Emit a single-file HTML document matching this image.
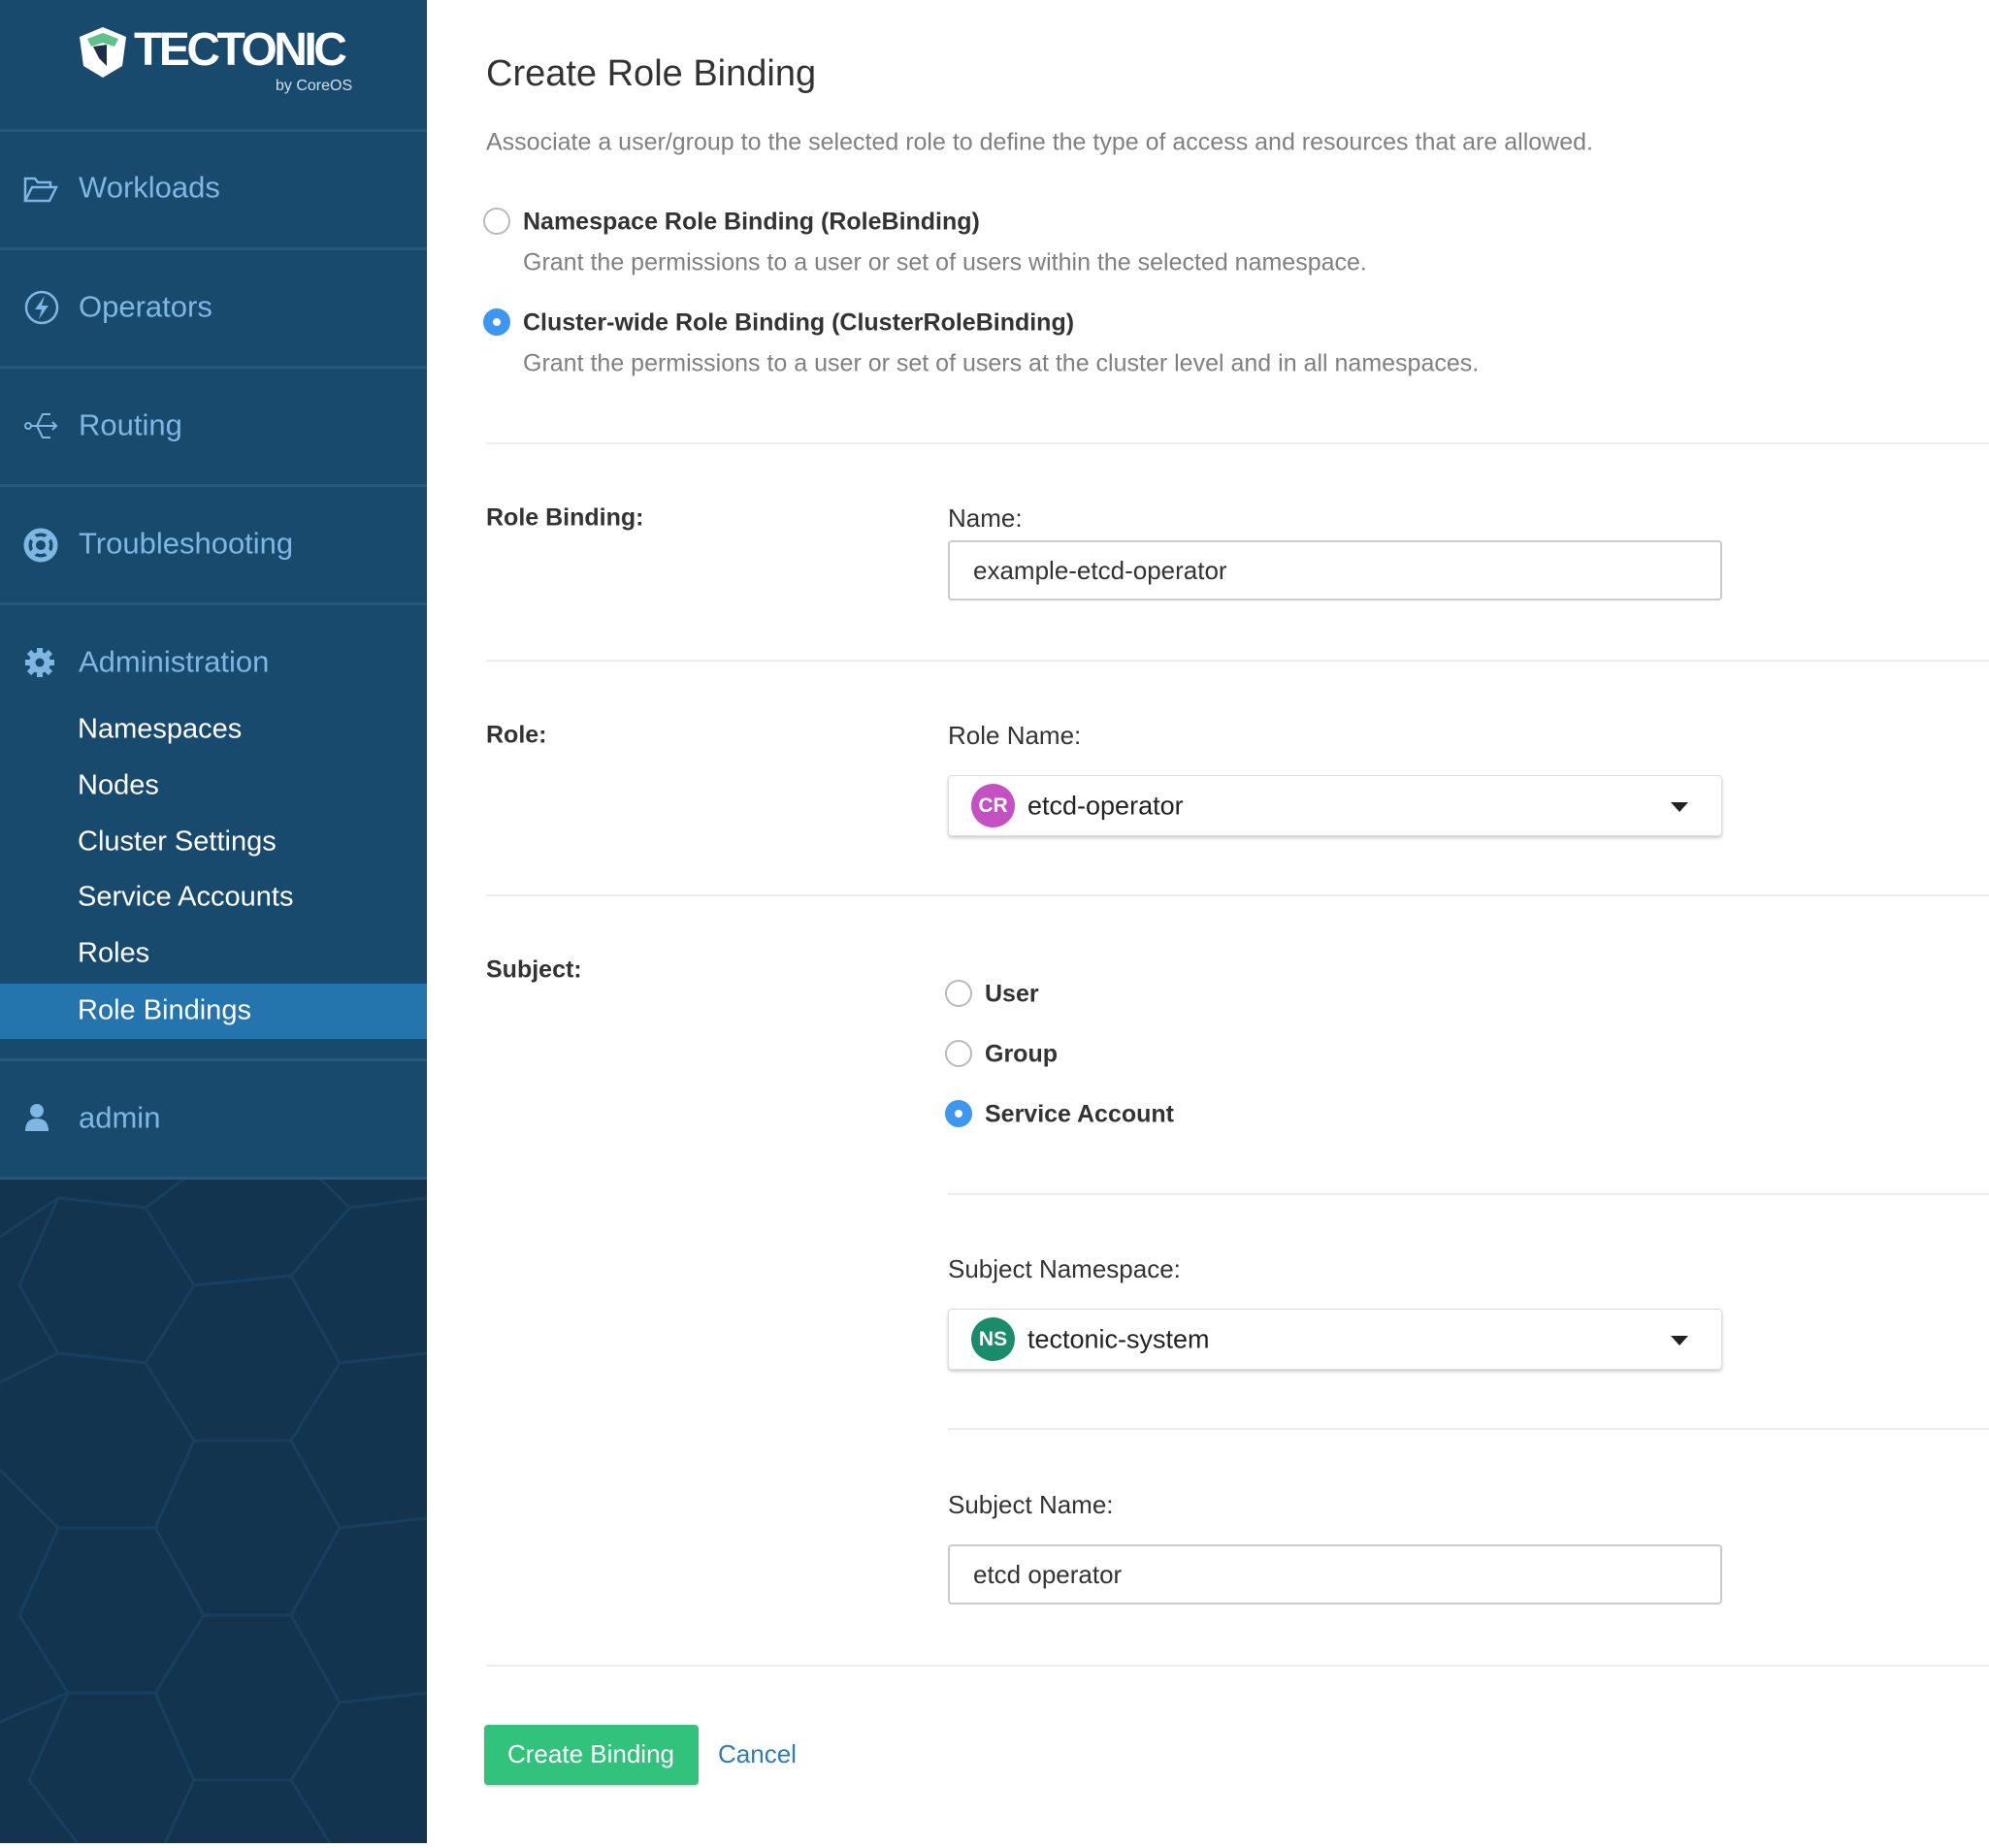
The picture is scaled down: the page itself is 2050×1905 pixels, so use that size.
<!DOCTYPE html>
<html><head><meta charset="utf-8"><style>
*{margin:0;padding:0;box-sizing:border-box}
body{width:2050px;height:1900px;background:#fff;font-family:"Liberation Sans",sans-serif;position:relative;overflow:hidden;color:#333}
.a{position:absolute;white-space:nowrap}
#sb{position:absolute;left:0;top:0;width:440px;height:1900px;background:#174a6c}
#hex{position:absolute;left:0;top:1215px;width:440px;height:685px;background:#12344f}
.sep{position:absolute;left:0;width:440px;height:3px;background:#26587a}
.nav{position:absolute;left:81px;font-size:31px;color:#7fb6e2;line-height:1;transform:translateY(-50%)}
.sub{position:absolute;left:80px;font-size:29px;color:#fff;line-height:1;transform:translateY(-50%)}
.ic{position:absolute;left:24px;transform:translateY(-50%)}
.t{position:absolute;line-height:1;transform:translateY(-50%);white-space:nowrap}
.hr{position:absolute;height:2px;background:#ececec;right:0}
.radio{position:absolute;width:28px;height:28px;border-radius:50%;border:2px solid #bbb;background:#fff;transform:translate(-50%,-50%)}
.radio.on{background:#3b97f2;border-color:#3b97f2}
.radio.on:after{content:"";position:absolute;left:8px;top:8px;width:8px;height:8px;border-radius:50%;background:#fff}
.inp{position:absolute;left:977px;width:798px;height:62px;border:2px solid #ccc;border-radius:4px;background:#fff}
.sel{position:absolute;left:977px;width:798px;height:63px;border:1px solid #ddd;border-radius:4px;background:#fff;box-shadow:0 2px 3px rgba(0,0,0,.2)}
.badge{position:absolute;left:23px;top:8px;width:45px;height:45px;border-radius:50%;color:#fff;font-size:21px;font-weight:bold;text-align:center;line-height:45px}
.caret{position:absolute;right:34px;top:27px;width:0;height:0;border-left:9px solid transparent;border-right:9px solid transparent;border-top:10px solid #222}
.lbl{font-size:26px;color:#333}
.b{font-weight:bold;font-size:25px;color:#333}
</style></head><body>
<div id="sb"></div>
<div id="hex"><svg width="440" height="685" viewBox="0 0 440 685"><g fill="none" stroke="#183f5e" stroke-width="3">
<path d="M0 60 L60 20 L150 30 L190 0 M150 30 L200 110 L150 190 L60 180 L20 110 L60 20 M200 110 L300 100 L360 30 L330 0 M300 100 L350 190 L300 270 L200 270 L150 190 M350 190 L440 180 M360 30 L440 20 M60 180 L0 210 M200 270 L160 360 L60 360 L0 300 M60 360 L20 450 L70 530 L160 530 L210 450 L160 360 M300 270 L350 360 L300 450 L210 450 M350 360 L440 350 M300 450 L350 540 L300 620 L200 620 L160 530 M70 530 L0 560 M70 530 L30 620 L80 685 M200 620 L170 685 M300 620 L340 685 M350 540 L440 530"/></g></svg></div>
<svg class="a" style="left:80px;top:26px" width="52" height="56" viewBox="0 0 52 56"><path d="M26 2 L50 12 L46 42 L26 54 L6 42 L2 12Z" fill="#fff"/><path d="M10 14 L26 8 L42 14 L38 22 L26 18 L14 22Z" fill="#5ec38b"/><path d="M16 22 L30 20 L30 42 L22 34Z" fill="#1b3048"/></svg>
<div class="a" style="left:138px;top:28px;font-size:48px;font-weight:bold;color:#fff;letter-spacing:-3.5px;line-height:1">TECTONIC</div>
<div class="a" style="left:284px;top:81px;font-size:16px;color:#cfe0ee;line-height:1">by CoreOS</div>
<div class="sep" style="top:133px"></div>
<div class="sep" style="top:255px"></div>
<div class="sep" style="top:377px"></div>
<div class="sep" style="top:499px"></div>
<div class="sep" style="top:621px"></div>
<div class="sep" style="top:1091px"></div>
<div class="sep" style="top:1213px"></div>
<svg class="ic" style="top:195px" width="36" height="28" viewBox="0 0 36 28" fill="none" stroke="#7fb6e2" stroke-width="2.5"><path d="M2 26 L2 3 L12 3 L15 7 L28 7 L28 12 M2 26 L9 12 L34 12 L27 26Z"/></svg>
<svg class="ic" style="top:317px" width="38" height="38" viewBox="0 0 38 38" fill="none" stroke="#7fb6e2" stroke-width="2.5"><circle cx="19" cy="19" r="16"/><path d="M22 7 L12 21 L19 21 L16 31 L26 17 L19 17Z" fill="#7fb6e2" stroke="none"/></svg>
<svg class="ic" style="top:439px" width="38" height="32" viewBox="0 0 38 32" fill="none" stroke="#7fb6e2" stroke-width="2"><circle cx="5" cy="16" r="3"/><path d="M8 16 L34 16 M30 12 L34 16 L30 20 M14 16 L20 4 L28 4 M14 16 L20 28 L28 28"/></svg>
<svg class="ic" style="top:562px" width="36" height="36" viewBox="0 0 36 36"><circle cx="18" cy="18" r="15" fill="none" stroke="#7fb6e2" stroke-width="5"/><circle cx="18" cy="18" r="7" fill="none" stroke="#7fb6e2" stroke-width="4"/><path d="M8 8 L14 14 M28 8 L22 14 M8 28 L14 22 M28 28 L22 22" stroke="#7fb6e2" stroke-width="6"/></svg>
<svg class="ic" style="top:683px" width="34" height="34" viewBox="0 0 34 34"><circle cx="17" cy="17" r="11" fill="#7fb6e2"/><g stroke="#7fb6e2" stroke-width="6"><path d="M17 2 V32 M2 17 H32 M6 6 L28 28 M28 6 L6 28"/></g><circle cx="17" cy="17" r="4.5" fill="#174a6c"/></svg>
<svg class="ic" style="top:1152px" width="28" height="32" viewBox="0 0 28 32"><circle cx="14" cy="9" r="7" fill="#7fb6e2"/><path d="M2 30 Q2 17 14 17 Q26 17 26 30Z" fill="#7fb6e2"/></svg>
<div class="nav" style="top:193px">Workloads</div>
<div class="nav" style="top:316px">Operators</div>
<div class="nav" style="top:438px">Routing</div>
<div class="nav" style="top:560px">Troubleshooting</div>
<div class="nav" style="top:682px">Administration</div>
<div class="a" style="left:0;top:1014px;width:440px;height:57px;background:#2474ad"></div>
<div class="sub" style="top:752px">Namespaces</div>
<div class="sub" style="top:810px">Nodes</div>
<div class="sub" style="top:868px">Cluster Settings</div>
<div class="sub" style="top:925px">Service Accounts</div>
<div class="sub" style="top:983px">Roles</div>
<div class="sub" style="top:1042px">Role Bindings</div>
<div class="nav" style="top:1152px">admin</div>

<div class="t" style="left:501px;top:76px;font-size:38px;color:#333">Create Role Binding</div>
<div class="t" style="left:501px;top:147px;font-size:25px;color:#808080">Associate a user/group to the selected role to define the type of access and resources that are allowed.</div>
<div class="radio" style="left:512px;top:228px"></div>
<div class="t b" style="left:539px;top:229px">Namespace Role Binding (RoleBinding)</div>
<div class="t" style="left:539px;top:271px;font-size:25px;color:#808080">Grant the permissions to a user or set of users within the selected namespace.</div>
<div class="radio on" style="left:512px;top:332px"></div>
<div class="t b" style="left:539px;top:333px">Cluster-wide Role Binding (ClusterRoleBinding)</div>
<div class="t" style="left:539px;top:375px;font-size:25px;color:#808080">Grant the permissions to a user or set of users at the cluster level and in all namespaces.</div>
<div class="hr" style="left:501px;top:456px"></div>

<div class="t b" style="left:501px;top:534px">Role Binding:</div>
<div class="t lbl" style="left:977px;top:534px">Name:</div>
<div class="inp" style="top:557px"></div>
<div class="t" style="left:1003px;top:588px;font-size:26px;color:#333">example-etcd-operator</div>
<div class="hr" style="left:501px;top:680px"></div>

<div class="t b" style="left:501px;top:758px">Role:</div>
<div class="t lbl" style="left:977px;top:758px">Role Name:</div>
<div class="sel" style="top:799px"><div class="badge" style="background:#c450c4">CR</div><div class="t" style="left:81px;top:31px;font-size:27px;color:#222">etcd-operator</div><div class="caret"></div></div>
<div class="hr" style="left:501px;top:922px"></div>

<div class="t b" style="left:501px;top:1000px">Subject:</div>
<div class="radio" style="left:988px;top:1024px"></div>
<div class="t b" style="left:1015px;top:1025px">User</div>
<div class="radio" style="left:988px;top:1086px"></div>
<div class="t b" style="left:1015px;top:1087px">Group</div>
<div class="radio on" style="left:988px;top:1148px"></div>
<div class="t b" style="left:1015px;top:1149px">Service Account</div>
<div class="hr" style="left:977px;top:1230px"></div>
<div class="t lbl" style="left:977px;top:1308px">Subject Namespace:</div>
<div class="sel" style="top:1349px"><div class="badge" style="background:#1a8c6c">NS</div><div class="t" style="left:81px;top:31px;font-size:27px;color:#222">tectonic-system</div><div class="caret"></div></div>
<div class="hr" style="left:977px;top:1472px"></div>
<div class="t lbl" style="left:977px;top:1551px">Subject Name:</div>
<div class="inp" style="top:1592px"></div>
<div class="t" style="left:1003px;top:1623px;font-size:26px;color:#333">etcd operator</div>
<div class="hr" style="left:501px;top:1716px"></div>

<div class="a" style="left:499px;top:1778px;width:221px;height:62px;background:#31c27c;border-radius:4px;box-shadow:0 2px 2px rgba(0,0,0,.15)"></div>
<div class="t" style="left:609px;top:1808px;font-size:26px;color:#fff;transform:translate(-50%,-50%)">Create Binding</div>
<div class="t" style="left:740px;top:1808px;font-size:26px;color:#2b7bc0">Cancel</div>
</body></html>
